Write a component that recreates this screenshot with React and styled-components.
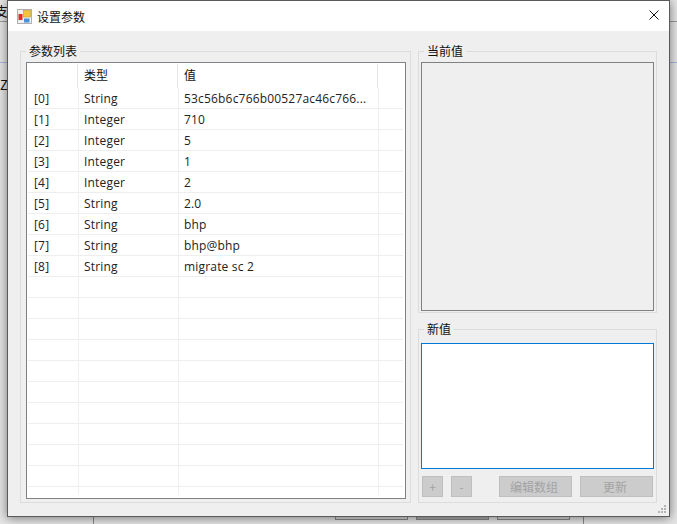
import React from "react";
import styled, { createGlobalStyle } from "styled-components";

const Global = createGlobalStyle`
  html, body { margin: 0; padding: 0; overflow: hidden; background: #e4e4e4; }
  * { box-sizing: border-box; }
`;
const Stage = styled.div`
  position: relative; width: 677px; height: 524px; overflow: hidden;
  background: #e6e6e6;
  font-family: "Noto Sans CJK SC", "Open Sans", "Noto Sans", sans-serif;
`;
const BackText = styled.span`
  position: absolute; left: ${p => p.$x}px; top: ${p => p.$y}px;
  font-size: 13px; line-height: 16px; color: #111;
`;
const BackLine = styled.div`
  position: absolute; background: ${p => p.$c};
  left: ${p => p.$x}px; top: ${p => p.$y}px; width: ${p => p.$w}px; height: ${p => p.$h}px;
`;
const BackButton = styled.div`
  position: absolute; left: ${p => p.$x}px; top: 508px; width: ${p => p.$w}px; height: 12px;
  background: ${p => p.$dark ? "#b0b0b0" : "#dcdcdc"}; border: 1px solid #8a8a8a;
`;
const Window = styled.div`
  position: absolute; left: 7px; top: 0; width: 663px; height: 517px;
  background: #efefef; border: 1px solid #5a5a5a;
  box-shadow: 0 1px 10px rgba(0,0,0,.5);
  display: flex; flex-direction: column;
`;
const TitleBar = styled.div`
  height: 30px; background: #fff; display: flex; align-items: center;
  padding: 0 9px; flex: none;
`;
const Title = styled.span`
  margin-left: 5px; font-size: 12px; color: #111; flex: 1;
`;
const Close = styled.svg`
  width: 10px; height: 10px; margin: 0 1px 2px 0; flex: none;
`;
const Body = styled.div`
  flex: 1; min-height: 0; display: flex; gap: 7px;
  padding: 14px 12px 13px 12px;
`;
const Group = styled.fieldset`
  margin: 0; padding: 0 2px 1px; min-width: 0;
  border: 1px solid #dcdcdc; position: relative;
  display: flex; flex-direction: column;
  ${p => p.$grow ? "flex: 1;" : ""}
  ${p => p.$h ? `height: ${p.$h}px; flex: none;` : ""}
`;
const Legend = styled.legend`
  margin-left: ${p => p.$ml}px; padding: 0 3px; font-size: 12px; line-height: 12px; color: #111;
`;
const LeftGroup = styled(Group)`
  width: 391px; flex: none; padding: 0 4px 3px 5px;
`;
const RightColumn = styled.div`
  width: 239px; flex: none; display: flex; flex-direction: column; gap: 10px;
`;
const Grid = styled.div`
  flex: 1; border: 1px solid #7f8287; background: #fff; margin-top: 5px;
  display: flex; flex-direction: column; overflow: hidden;
`;
const HeadRow = styled.div`
  display: grid; grid-template-columns: 51px 100px 200px 1fr; flex: none; height: 25px;
`;
const HeadCell = styled.div`
  font-size: 12px; line-height: 22px; color: #111; padding-left: 6px; height: 24px; margin-top: 1px;
  border-right: 1px solid #e6e6e6;
  &:last-child { border-right: 0; }
`;
const Row = styled.div`
  display: grid; grid-template-columns: 51px 100px 200px 1fr; flex: none;
  height: ${p => p.$h}px; margin: 0 2px 0 1px;
`;
const Cell = styled.div`
  font: 12px/21px "Open Sans", "Noto Sans", sans-serif; letter-spacing: .18px; color: #222; padding-left: 5px;
  border-right: 1px solid #eeeeee;
  border-bottom: ${p => p.$open ? "0" : "1px solid #eeeeee"};
  white-space: nowrap; overflow: hidden;
  &:first-child { padding-left: 6px; }
  &:last-child { border-right: 0; }
`;
const ReadBox = styled.div`
  flex: 1; border: 1px solid #808080; background: #efefef; margin-top: 5px;
`;
const NewBox = styled.div`
  height: 126px; border: 1px solid #0078d7; background: #fff; margin-top: 8px; flex: none;
`;
const Buttons = styled.div`
  display: flex; align-items: center; margin: 7px 1px 0; height: 21px; flex: none;
`;
const Btn = styled.button`
  width: ${p => p.$w}px; height: 21px; margin-left: ${p => p.$gap || 0}px; padding: 0 ${p => p.$w > 30 ? 3 : 0}px 0 0;
  background: #cccccc; border: 1px solid #bfbfbf; color: #a3a3a3;
  font: 12px/19px "Noto Sans CJK SC", sans-serif;
`;
const Grip = styled.svg`
  position: absolute; right: 2px; bottom: 2px; width: 9px; height: 9px;
`;

const rows = [
  ["[0]", "String", "53c56b6c766b00527ac46c766..."],
  ["[1]", "Integer", "710"],
  ["[2]", "Integer", "5"],
  ["[3]", "Integer", "1"],
  ["[4]", "Integer", "2"],
  ["[5]", "String", "2.0"],
  ["[6]", "String", "bhp"],
  ["[7]", "String", "bhp@bhp"],
  ["[8]", "String", "migrate sc 2"],
  ...Array.from({ length: 10 }, () => ["", "", ""]),
];

export default function App() {
  return (
    <Stage>
      <Global />
      <BackText $x={-5} $y={3}>支</BackText>
      <BackText $x={0} $y={77}>Z</BackText>
      <BackLine $x={0} $y={21} $w={8} $h={1} $c="#9a9a9a" />
      <BackLine $x={0} $y={62} $w={8} $h={1} $c="#a8b8dc" />
      <BackLine $x={670} $y={21} $w={7} $h={1} $c="#9a9a9a" />
      <BackLine $x={670} $y={62} $w={7} $h={1} $c="#a8b8dc" />
      <BackLine $x={93} $y={510} $w={1} $h={14} $c="#8a8a8a" />
      <BackLine $x={583} $y={510} $w={1} $h={14} $c="#8a8a8a" />
      <BackButton $x={335} $w={73} />
      <BackButton $x={416} $w={73} $dark />
      <BackButton $x={497} $w={73} />
      <Window>
        <TitleBar>
          <svg width="15" height="15" viewBox="0 0 15 15">
            <rect x="0.5" y="0.5" width="14" height="14" fill="#f0f0f0" stroke="#b0b0b0" />
            <rect x="1.5" y="5" width="4" height="6" fill="#d8322a" />
            <rect x="6.5" y="1.5" width="7" height="6.5" fill="#f2c53d" stroke="#c69a2a" strokeWidth="0.6" />
            <rect x="7" y="9.5" width="5.5" height="4" fill="#4a90d9" />
          </svg>
          <Title>设置参数</Title>
          <Close viewBox="0 0 10 10">
            <path d="M.5.5l9 9M9.5.5l-9 9" stroke="#111" strokeWidth="1" fill="none" />
          </Close>
        </TitleBar>
        <Body>
          <LeftGroup>
            <Legend $ml={0}>参数列表</Legend>
            <Grid>
              <HeadRow>
                <HeadCell />
                <HeadCell>类型</HeadCell>
                <HeadCell>值</HeadCell>
                <HeadCell />
              </HeadRow>
              {rows.map((r, i) => (
                <Row key={i} $h={21}>
                  <Cell>{r[0]}</Cell>
                  <Cell>{r[1]}</Cell>
                  <Cell>{r[2]}</Cell>
                  <Cell />
                </Row>
              ))}
              <Row $h={8}>
                <Cell $open />
                <Cell $open />
                <Cell $open />
                <Cell $open />
              </Row>
            </Grid>
          </LeftGroup>
          <RightColumn>
            <Group $grow>
              <Legend $ml={3}>当前值</Legend>
              <ReadBox />
            </Group>
            <Group $h={180}>
              <Legend $ml={3}>新值</Legend>
              <NewBox />
              <Buttons>
                <Btn $w={21}>+</Btn>
                <Btn $w={21} $gap={8}>-</Btn>
                <Btn $w={73} $gap={27}>编辑数组</Btn>
                <Btn $w={73} $gap={8}>更新</Btn>
              </Buttons>
            </Group>
          </RightColumn>
        </Body>
        <Grip viewBox="0 0 9 9">
          <g fill="#b4b4b4">
            <rect x="6" y="0" width="2" height="2" />
            <rect x="3" y="3" width="2" height="2" />
            <rect x="6" y="3" width="2" height="2" />
            <rect x="0" y="6" width="2" height="2" />
            <rect x="3" y="6" width="2" height="2" />
            <rect x="6" y="6" width="2" height="2" />
          </g>
        </Grip>
      </Window>
    </Stage>
  );
}
